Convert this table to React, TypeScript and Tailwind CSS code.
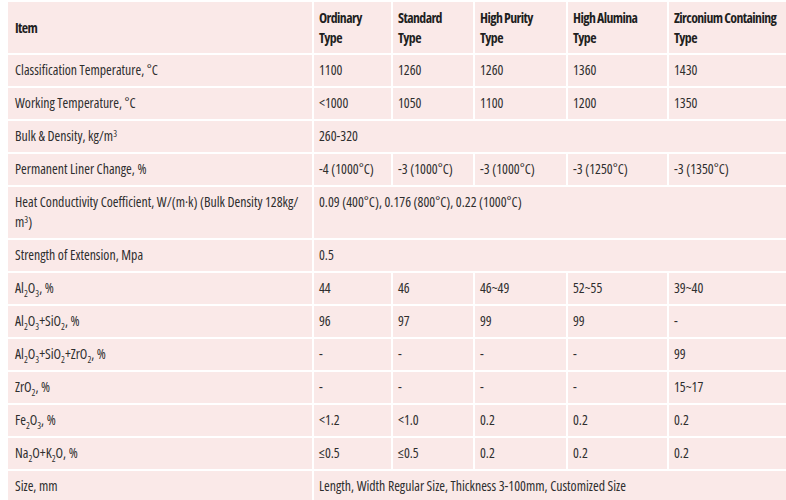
import type { ReactNode } from 'react';

type Row = { label: ReactNode; values: ReactNode[]; tall?: boolean };

const F = ({ children }: { children: ReactNode }) => <sub className="text-[9px] align-[-2px]">{children}</sub>;

const rows: Row[] = [
  { label: 'Classification Temperature, °C', values: ['1100', '1260', '1260', '1360', '1430'] },
  { label: 'Working Temperature, °C', values: ['<1000', '1050', '1100', '1200', '1350'] },
  {
    label: (
      <>
        Bulk &amp; Density, kg/m<sup className="text-[9px]">3</sup>
      </>
    ),
    values: ['260-320'],
  },
  { label: 'Permanent Liner Change, %', values: ['-4 (1000°C)', '-3 (1000°C)', '-3 (1000°C)', '-3 (1250°C)', '-3 (1350°C)'] },
  {
    label: (
      <>
        Heat Conductivity Coefficient, W/(m·k) (Bulk Density 128kg/<wbr />m<sup className="text-[9px]">3</sup>)
      </>
    ),
    values: ['0.09 (400°C), 0.176 (800°C), 0.22 (1000°C)'],
    tall: true,
  },
  { label: 'Strength of Extension, Mpa', values: ['0.5'] },
  {
    label: (
      <>
        Al<F>2</F>O<F>3</F>, %
      </>
    ),
    values: ['44', '46', '46~49', '52~55', '39~40'],
  },
  {
    label: (
      <>
        Al<F>2</F>O<F>3</F>+SiO<F>2</F>, %
      </>
    ),
    values: ['96', '97', '99', '99', '-'],
  },
  {
    label: (
      <>
        Al<F>2</F>O<F>3</F>+SiO<F>2</F>+ZrO<F>2</F>, %
      </>
    ),
    values: ['-', '-', '-', '-', '99'],
  },
  {
    label: (
      <>
        ZrO<F>2</F>, %
      </>
    ),
    values: ['-', '-', '-', '-', '15~17'],
  },
  {
    label: (
      <>
        Fe<F>2</F>O<F>3</F>, %
      </>
    ),
    values: ['<1.2', '<1.0', '0.2', '0.2', '0.2'],
  },
  {
    label: (
      <>
        Na<F>2</F>O+K<F>2</F>O, %
      </>
    ),
    values: ['≤0.5', '≤0.5', '0.2', '0.2', '0.2'],
  },
  { label: 'Size, mm', values: ['Length, Width Regular Size, Thickness 3-100mm, Customized Size'] },
];

const heads = ['Ordinary', 'Standard', 'High Purity', 'High Alumina', 'Zirconium Containing'];

export default function App() {
  return (
    <div
      className="w-[786px] h-[500px] overflow-hidden bg-white"
      style={{ fontFamily: '"Open Sans", sans-serif', fontStretch: '75%' }}
    >
      <table className="ml-[6px] w-[800px] table-fixed border-collapse text-[13.8px] leading-[20px] text-[#2e2e2e]">
        <colgroup>
          <col className="w-[306px]" />
          <col className="w-[79px]" />
          <col className="w-[82px]" />
          <col className="w-[93px]" />
          <col className="w-[101px]" />
          <col />
        </colgroup>
        <thead>
          <tr className="h-[53px]">
            <th className="border-2 border-white bg-[#fae9e8] px-[7px] text-left align-middle font-bold tracking-[-0.6px] text-[#1f1f1f]">
              Item
            </th>
            {heads.map((h) => (
              <th
                key={h}
                className="whitespace-nowrap border-2 border-white bg-[#fae9e8] px-[5px] text-left align-middle font-bold tracking-[-0.6px] text-[#1f1f1f]"
              >
                {h}
                <br />
                Type
              </th>
            ))}
          </tr>
        </thead>
        <tbody>
          {rows.map((r, i) => (
            <tr key={i} className={r.tall ? 'h-[53px]' : 'h-[33px]'}>
              <td className="border-2 border-white bg-[#fae9e8] px-[7px] pt-[5px] align-top">{r.label}</td>
              {r.values.length === 1 ? (
                <td colSpan={5} className="border-2 border-white bg-[#fae9e8] px-[5px] pt-[5px] align-top">
                  {r.values[0]}
                </td>
              ) : (
                r.values.map((v, j) => (
                  <td key={j} className="border-2 border-white bg-[#fae9e8] px-[5px] pt-[5px] align-top">
                    {v}
                  </td>
                ))
              )}
            </tr>
          ))}
        </tbody>
      </table>
    </div>
  );
}
